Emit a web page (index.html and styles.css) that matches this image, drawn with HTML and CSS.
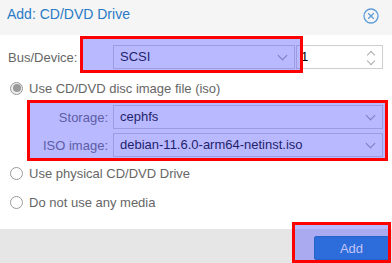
FILE: index.html
```html
<!DOCTYPE html>
<html lang="en">
<head>
    <title>Add: CD/DVD Drive</title>
    <meta charset="UTF-8">
    <link rel="stylesheet" href="styles.css">
</head>
<body>
    <div class="window">
        <div class="header">
            <div class="title">Add: CD/DVD Drive</div>
            <svg class="close" width="16" height="16" viewBox="0 0 16 16">
                <circle cx="8" cy="8" r="7" fill="none" stroke="#5f9dd8" stroke-width="1.3"/>
                <path d="M5.2 5.2 L10.8 10.8 M10.8 5.2 L5.2 10.8" stroke="#5f9dd8" stroke-width="1.3" fill="none"/>
            </svg>
        </div>
        <div class="body">
            <div class="row">
                <div class="label">Bus/Device:</div>
                <div class="field combo">SCSI<span class="chev"></span></div>
                <div class="field spinner">1
                    <span class="spin">
                        <span class="up"></span>
                        <span class="down"></span>
                    </span>
                </div>
            </div>
            <div class="radio-row first">
                <span class="radio checked"></span>
                <span class="radio-text">Use CD/DVD disc image file (iso)</span>
            </div>
            <div class="group">
                <div class="row">
                    <div class="label right">Storage:</div>
                    <div class="field combo grow">cephfs<span class="chev"></span></div>
                </div>
                <div class="row">
                    <div class="label right">ISO image:</div>
                    <div class="field combo grow">debian-11.6.0-arm64-netinst.iso<span class="chev"></span></div>
                </div>
            </div>
            <div class="radio-row second">
                <span class="radio"></span>
                <span class="radio-text">Use physical CD/DVD Drive</span>
            </div>
            <div class="radio-row third">
                <span class="radio"></span>
                <span class="radio-text">Do not use any media</span>
            </div>
        </div>
        <div class="footer">
            <button type="button" class="btn-add">Add</button>
        </div>

        <div class="highlight hl-bus"></div>
        <div class="highlight hl-iso"></div>
        <div class="hl-add-fill"></div>
        <div class="highlight hl-add"></div>
    </div>
</body>
</html>
```

FILE: styles.css
```css
body {
    margin: 0;
    font-family: "Liberation Sans", Arial, sans-serif;
    font-size: 13px;
    color: #666;
    background-color: #fff;
}
.window {
    position: relative;
    width: 392px;
    height: 263px;
    overflow: hidden;
    background-color: #fff;
}
.header {
    height: 35px;
    box-sizing: border-box;
    padding: 6px 7px 0 7px;
    background-color: #f5f5f5;
    display: flex;
    justify-content: space-between;
    align-items: flex-start;
}
.title {
    font-size: 14px;
    line-height: 16px;
    color: #2a7ac6;
}
.close {
    margin-top: 2px;
    margin-right: 6px;
}
.body {
    height: 194px;
    box-sizing: border-box;
    padding: 10px 9px 0 8px;
}
.row {
    display: flex;
    align-items: center;
    height: 24px;
}
.label {
    width: 105px;
    flex-shrink: 0;
    color: #666;
}
.label.right {
    text-align: right;
    padding-right: 5px;
    box-sizing: border-box;
}
.field {
    position: relative;
    height: 24px;
    box-sizing: border-box;
    border: 1px solid #cfcfcf;
    padding-left: 6px;
    line-height: 22px;
    color: #000;
    background-color: #fff;
}
.combo {
    width: 182px;
}
.combo.grow {
    flex: 1;
}
.chev {
    position: absolute;
    right: 8px;
    top: 6px;
    width: 6px;
    height: 6px;
    border-right: 1px solid #999;
    border-bottom: 1px solid #999;
    transform: rotate(45deg);
}
.spinner {
    width: 87px;
    margin-left: 1px;
    padding-left: 4px;
}
.spin {
    position: absolute;
    right: 7px;
    top: 4px;
    width: 8px;
    height: 14px;
}
.spin .up, .spin .down {
    position: absolute;
    left: 1px;
    width: 5px;
    height: 5px;
    border-left: 1px solid #aaa;
    border-top: 1px solid #aaa;
}
.spin .up {
    top: 2px;
    transform: rotate(45deg);
}
.spin .down {
    top: 8px;
    transform: rotate(225deg);
}
.radio-row {
    display: flex;
    align-items: center;
    height: 22px;
    padding-left: 2px;
}
.radio-row.first {
    margin-top: 8px;
}
.radio-row.second {
    margin-top: 5px;
}
.radio-row.third {
    margin-top: 7px;
}
.radio {
    width: 13px;
    height: 13px;
    box-sizing: border-box;
    border: 1px solid #999;
    border-radius: 50%;
    background-color: #fff;
    display: flex;
    align-items: center;
    justify-content: center;
}
.radio.checked {
    background-color: #eee;
}
.radio.checked::after {
    content: "";
    width: 8px;
    height: 8px;
    border-radius: 50%;
    background-color: #9a9a9a;
}
.radio-text {
    margin-left: 6px;
    color: #666;
}
.group {
    margin-top: 6px;
    display: flex;
    flex-direction: column;
    gap: 4px;
}
.footer {
    height: 34px;
    box-sizing: border-box;
    padding: 7px 3px 0 0;
    background-color: #e6e6e6;
    display: flex;
    justify-content: flex-end;
}
.btn-add {
    position: relative;
    z-index: 2;
    width: 75px;
    height: 24px;
    border: 1px solid #2663c8;
    border-radius: 2px;
    background-color: #2c6ddb;
    color: #c4c4f6;
    font-family: "Liberation Sans", Arial, sans-serif;
    font-size: 13px;
    padding: 0;
}
.highlight {
    position: absolute;
    box-sizing: border-box;
    border: 3px solid #ff0000;
    background-color: rgba(80, 80, 255, 0.4);
    z-index: 1;
}
.hl-bus {
    left: 80px;
    top: 36px;
    width: 223px;
    height: 37px;
}
.hl-iso {
    left: 27px;
    top: 100px;
    width: 361px;
    height: 61px;
}
.hl-add-fill {
    position: absolute;
    left: 292px;
    top: 222px;
    width: 99px;
    height: 41px;
    background-color: rgba(80, 80, 255, 0.4);
    z-index: 1;
}
.hl-add {
    left: 292px;
    top: 222px;
    width: 99px;
    height: 41px;
    z-index: 3;
    background-color: transparent;
}
```
